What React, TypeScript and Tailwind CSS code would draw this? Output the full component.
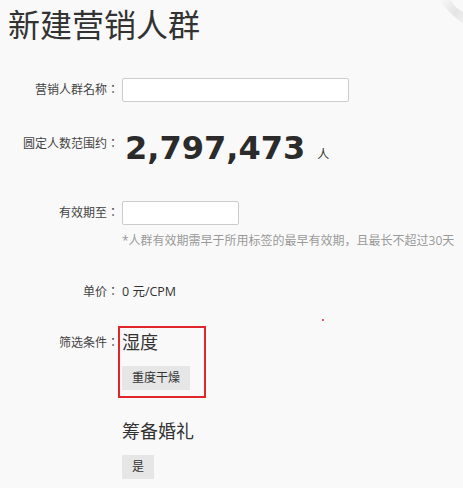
import React from 'react';

const font = { fontFamily: '"Open Sans", "Noto Sans CJK SC", sans-serif' };
const labelFont = { fontFamily: '"Open Sans", "Noto Sans CJK TC", sans-serif' };

const Label: React.FC<{ children: React.ReactNode; className?: string }> = ({ children, className = '' }) => (
  <div className={`w-[119px] shrink-0 text-right text-[12px] leading-[20px] text-[#444] ${className}`} style={labelFont}>
    {children}
  </div>
);

const Tag: React.FC<{ children: React.ReactNode }> = ({ children }) => (
  <div className="inline-flex h-[24px] items-center bg-[#e6e6e6] px-[10px] text-[12px] text-[#333]">{children}</div>
);

export default function App() {
  return (
    <div className="relative h-[488px] w-[463px] overflow-hidden bg-[#f9f9f9]" style={font}>
      {/* page curl in the corner */}
      <svg className="absolute right-0 top-0" width="40" height="34" viewBox="0 0 40 34">
        <defs>
          <linearGradient id="curl" x1="0" y1="0" x2="1" y2="1">
            <stop offset="0" stopColor="#f9f9f9" />
            <stop offset="0.6" stopColor="#e4e4e4" />
            <stop offset="1" stopColor="#f2f2f2" />
          </linearGradient>
        </defs>
        <path d="M16 0 C22 8 30 16 40 24 L40 12 C34 9 30 5 28 0 Z" fill="url(#curl)" />
      </svg>
      <span className="absolute left-[322px] top-[319px] h-[2px] w-[2px] rounded-full bg-[#e23]" />

      <h1 className="ml-[8px] h-[50px] text-[32px] leading-[50px] text-[#333]">新建营销人群</h1>

      <div className="mt-[28px] flex items-center">
        <Label>营销人群名称：</Label>
        <input className="ml-[3px] h-[24px] w-[227px] rounded-[2px] border border-[#ccc] bg-white" />
      </div>

      <div className="mt-[26px] flex h-[40px] items-start">
        <Label className="mt-[6px]">圆定人数范围约：</Label>
        <div className="ml-[6px] flex items-baseline">
          <span className="text-[32px] font-bold leading-[40px] text-[#2b2b2b]" style={{ fontFamily: '"DejaVu Sans", sans-serif' }}>
            2,797,473
          </span>
          <span className="ml-[12px] text-[12px] text-[#333]">人</span>
        </div>
      </div>

      <div className="mt-[33px] flex items-center">
        <Label>有效期至：</Label>
        <input className="ml-[3px] h-[24px] w-[117px] rounded-[2px] border border-[#ccc] bg-white" />
      </div>
      <div className="ml-[122px] mt-[8px] text-[12px] leading-[16px] text-[#999]">*人群有效期需早于所用标签的最早有效期，且最长不超过30天</div>

      <div className="mt-[33px] flex items-center">
        <Label>单价：</Label>
        <span className="ml-[3px] text-[12.5px] leading-[20px] text-[#333]">0 元/CPM</span>
      </div>

      <div className="mt-[24px] flex items-start">
        <Label className="mt-[7px]">筛选条件：</Label>
        <div className="-ml-[1px] w-[88px] border-2 border-[#e0262b] pb-[6px] pl-[2px]">
          <div className="text-[18px] leading-[28px] text-[#333]">湿度</div>
          <div className="mt-[8px]">
            <Tag>重度干燥</Tag>
          </div>
        </div>
      </div>

      <div className="ml-[122px] mt-[19px]">
        <div className="text-[18px] leading-[28px] text-[#333]">筹备婚礼</div>
        <div className="mt-[8px]">
          <Tag>是</Tag>
        </div>
      </div>
    </div>
  );
}
